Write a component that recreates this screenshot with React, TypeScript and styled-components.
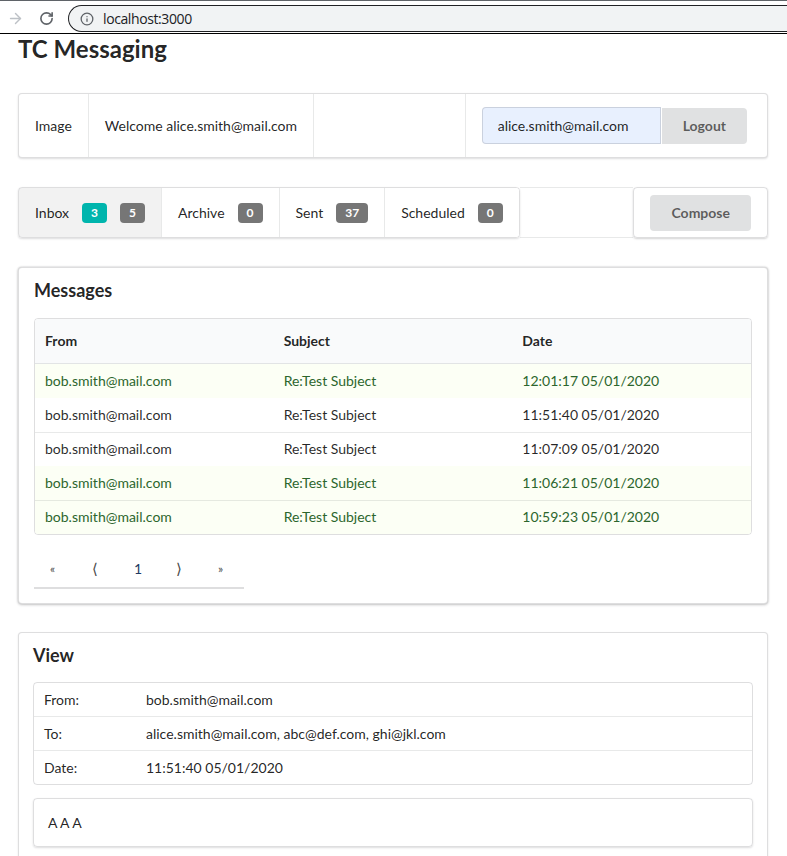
import React from 'react'
import styled, { createGlobalStyle } from 'styled-components'
import { ArrowRight, RotateCw, Info } from 'lucide-react'

const GlobalStyle = createGlobalStyle`
  html, body {
    margin:0;
    padding:0;
    overflow:hidden;
    background:#fff;
  }
  body {
    font-family: Lato, "Liberation Sans", sans-serif;
    font-size:14px;
    color:rgba(0,0,0,.87);
  }
  * { box-sizing:border-box; }
`

// fake browser toolbar
const BrowserBar = styled.div`
  height:34px;
  display:flex;
  align-items:flex-start;
  padding-top:4px;
  border-top:1px solid #5f6368;
  border-bottom:1px solid #000;
  background:#fff;
`
const NavIcon = styled.span<{ $gap?: number }>`
  width:30px;
  height:27px;
  margin-left:${p => p.$gap || 0}px;
  display:flex;
  align-items:center;
  justify-content:center;
`
const Omnibox = styled.div`
  flex:1;
  height:27px;
  margin-left:7px;
  display:flex;
  align-items:center;
  padding-left:11px;
  background:#f1f3f4;
  border:1px solid #202124;
  border-right:none;
  border-radius:14px 0 0 14px;
`
const Url = styled.span`
  margin-left:9px;
  font-family:"Open Sans", "Noto Sans", sans-serif;
  font-size:14px;
  letter-spacing:-0.4px;
  color:#202124;
`

const Page = styled.div`
  padding:0 19px 0 18px;
`
const Title = styled.h1`
  margin:3px 0 32px;
  font-size:24px;
  line-height:24px;
  font-weight:700;
`

// top menu
const Menu = styled.div`
  display:flex;
  align-items:stretch;
  border:1px solid rgba(34,36,38,.15);
  border-radius:4px;
  box-shadow:0 1px 2px 0 rgba(34,36,38,.15);
  background:#fff;
  margin-bottom:29px;
`
const MenuItem = styled.div<{ $divider?: boolean; $grow?: boolean }>`
  display:flex;
  align-items:center;
  padding:0 16px;
  flex:${p => (p.$grow ? 1 : 'none')};
  border-left:${p => (p.$divider ? '1px solid rgba(34,36,38,.1)' : 'none')};
`
const RightItem = styled.div`
  display:flex;
  align-items:center;
  padding:13px 20px 13px 16px;
  border-left:1px solid rgba(34,36,38,.1);
`
const EmailInput = styled.input`
  width:179px;
  height:37px;
  padding:0 15px;
  margin:0;
  font-family:Lato, sans-serif;
  font-size:14px;
  color:rgba(0,0,0,.87);
  background:#e8f0fe;
  border:1px solid rgba(34,36,38,.15);
  border-radius:4px 0 0 4px;
  outline:none;
`
const GreyButton = styled.button<{ $side?: boolean }>`
  height:36px;
  margin:0 0 0 ${p => (p.$side ? 1 : 0)}px;
  padding:0 21px;
  font-family:Lato, sans-serif;
  font-size:14px;
  font-weight:700;
  color:rgba(0,0,0,.6);
  background:#e0e1e2;
  border:none;
  border-radius:${p => (p.$side ? '0 4px 4px 0' : '4px')};
`

// tabs bar
const TabsBar = styled.div`
  display:flex;
  height:51px;
  margin-bottom:29px;
`
const TabGroup = styled.div`
  display:flex;
  border:1px solid rgba(34,36,38,.15);
  border-radius:4px;
  box-shadow:0 1px 2px 0 rgba(34,36,38,.15);
  overflow:hidden;
`
const Tab = styled.div<{ $active?: boolean; $divider?: boolean }>`
  display:flex;
  align-items:center;
  padding:0 16px;
  background:${p => (p.$active ? 'rgba(0,0,0,.05)' : '#fff')};
  border-left:${p => (p.$divider ? '1px solid rgba(34,36,38,.1)' : 'none')};
`
const Badge = styled.span<{ $color: string }>`
  margin-left:13px;
  padding:4px 9px;
  font-size:12px;
  font-weight:700;
  line-height:12px;
  color:#fff;
  background:${p => p.$color};
  border-radius:4px;
`
const Filler = styled.div`
  flex:1;
  border-top:1px solid rgba(34,36,38,.1);
  border-bottom:1px solid rgba(34,36,38,.1);
`
const ComposeBox = styled.div`
  display:flex;
  align-items:center;
  padding:0 16px;
  border:1px solid rgba(34,36,38,.15);
  border-radius:4px;
  box-shadow:0 1px 2px 0 rgba(34,36,38,.2);
`

// segments
const Segment = styled.section<{ $padX: number; $raised?: boolean }>`
  padding:11px ${p => p.$padX}px 14px;
  margin-bottom:28px;
  background:#fff;
  border:1px solid rgba(34,36,38,.15);
  border-radius:4px;
  box-shadow:${p =>
    p.$raised
      ? '0 0 2px 0 rgba(34,36,38,.25), 0 1px 3px 0 rgba(34,36,38,.2)'
      : '0 1px 2px 0 rgba(34,36,38,.12)'};
`
const SegmentTitle = styled.h3<{ $gap: number }>`
  margin:0 0 ${p => p.$gap}px;
  font-size:18px;
  line-height:23px;
  font-weight:700;
`

const TableBox = styled.div`
  border:1px solid rgba(34,36,38,.15);
  border-radius:4px;
  overflow:hidden;
`
const Table = styled.table`
  width:100%;
  border-collapse:separate;
  border-spacing:0;
  table-layout:fixed;
`
const Th = styled.th`
  text-align:left;
  padding:12px 10px;
  line-height:20px;
  font-weight:700;
  background:#f9fafb;
  border-bottom:1px solid rgba(34,36,38,.1);
`
const Tr = styled.tr<{ $positive?: boolean }>`
  background:${p => (p.$positive ? '#fcfff5' : '#fff')};
  color:${p => (p.$positive ? '#2c662d' : 'rgba(0,0,0,.85)')};
  & + & td {
    border-top:1px solid rgba(34,36,38,.1);
    padding-top:6px;
  }
`
const Td = styled.td`
  padding:7px 10px;
  line-height:20px;
`

const Pager = styled.nav`
  display:flex;
  width:fit-content;
  margin-top:14px;
  border-bottom:2px solid rgba(34,36,38,.15);
`
const PageItem = styled.a<{ $active?: boolean; $size: number }>`
  width:42px;
  height:38px;
  padding:0 0 0 16px;
  display:flex;
  align-items:center;
  white-space:nowrap;
  font-size:${p => p.$size}px;
  color:${p => (p.$active ? '#1f3b63' : '#4a4a4a')};
`

const MetaBox = styled.div`
  border:1px solid rgba(34,36,38,.15);
  border-radius:4px;
`
const MetaRow = styled.div`
  display:grid;
  grid-template-columns:102px 1fr;
  & + & { border-top:1px solid rgba(34,36,38,.1); }
`
const MetaCell = styled.div`
  padding:7px 10px;
  line-height:19px;
`
const BodyBox = styled.div`
  margin-top:13px;
  padding:14px;
  line-height:19px;
  border:1px solid rgba(34,36,38,.15);
  border-radius:4px;
  box-shadow:0 1px 2px 0 rgba(34,36,38,.15);
`

const messages = [
  { from: 'bob.smith@mail.com', subject: 'Re:Test Subject', date: '12:01:17 05/01/2020', unread: true },
  { from: 'bob.smith@mail.com', subject: 'Re:Test Subject', date: '11:51:40 05/01/2020', unread: false },
  { from: 'bob.smith@mail.com', subject: 'Re:Test Subject', date: '11:07:09 05/01/2020', unread: false },
  { from: 'bob.smith@mail.com', subject: 'Re:Test Subject', date: '11:06:21 05/01/2020', unread: true },
  { from: 'bob.smith@mail.com', subject: 'Re:Test Subject', date: '10:59:23 05/01/2020', unread: true },
]

const tabs = [
  { name: 'Inbox', counts: [['3', '#00b5ad'], ['5', '#767676']] },
  { name: 'Archive', counts: [['0', '#767676']] },
  { name: 'Sent', counts: [['37', '#767676']] },
  { name: 'Scheduled', counts: [['0', '#767676']] },
]

export default function App() {
  return (
    <>
      <GlobalStyle />
      <BrowserBar>
        <NavIcon><ArrowRight size={17} color="#bdc1c6" strokeWidth={2} /></NavIcon>
        <NavIcon $gap={1}><RotateCw size={15} color="#5f6368" strokeWidth={2.6} /></NavIcon>
        <Omnibox>
          <Info size={14} color="#5f6368" strokeWidth={2.2} />
          <Url>localhost:3000</Url>
        </Omnibox>
      </BrowserBar>

      <Page>
        <Title>TC Messaging</Title>

        <Menu>
          <MenuItem>Image</MenuItem>
          <MenuItem $divider>Welcome alice.smith@mail.com</MenuItem>
          <MenuItem $divider $grow />
          <RightItem>
            <EmailInput defaultValue="alice.smith@mail.com" />
            <GreyButton $side>Logout</GreyButton>
          </RightItem>
        </Menu>

        <TabsBar>
          <TabGroup>
            {tabs.map((t, i) => (
              <Tab key={t.name} $active={i === 0} $divider={i > 0}>
                {t.name}
                {t.counts.map(([n, c], j) => (
                  <Badge key={j} $color={c}>{n}</Badge>
                ))}
              </Tab>
            ))}
          </TabGroup>
          <Filler />
          <ComposeBox>
            <GreyButton>Compose</GreyButton>
          </ComposeBox>
        </TabsBar>

        <Segment $padX={15} $raised>
          <SegmentTitle $gap={16}>Messages</SegmentTitle>
          <TableBox>
            <Table>
              <thead>
                <tr>
                  <Th>From</Th>
                  <Th>Subject</Th>
                  <Th>Date</Th>
                </tr>
              </thead>
              <tbody>
                {messages.map((m, i) => (
                  <Tr key={i} $positive={m.unread}>
                    <Td>{m.from}</Td>
                    <Td>{m.subject}</Td>
                    <Td>{m.date}</Td>
                  </Tr>
                ))}
              </tbody>
            </Table>
          </TableBox>
          <Pager>
            <PageItem $size={12}>«</PageItem>
            <PageItem $size={15}>⟨</PageItem>
            <PageItem $size={14} $active>1</PageItem>
            <PageItem $size={15}>⟩</PageItem>
            <PageItem $size={12}>»</PageItem>
          </Pager>
        </Segment>

        <Segment $padX={14}>
          <SegmentTitle $gap={15}>View</SegmentTitle>
          <MetaBox>
            <MetaRow>
              <MetaCell>From:</MetaCell>
              <MetaCell>bob.smith@mail.com</MetaCell>
            </MetaRow>
            <MetaRow>
              <MetaCell>To:</MetaCell>
              <MetaCell>alice.smith@mail.com, abc@def.com, ghi@jkl.com</MetaCell>
            </MetaRow>
            <MetaRow>
              <MetaCell>Date:</MetaCell>
              <MetaCell>11:51:40 05/01/2020</MetaCell>
            </MetaRow>
          </MetaBox>
          <BodyBox>A A A</BodyBox>
        </Segment>
      </Page>
    </>
  )
}
